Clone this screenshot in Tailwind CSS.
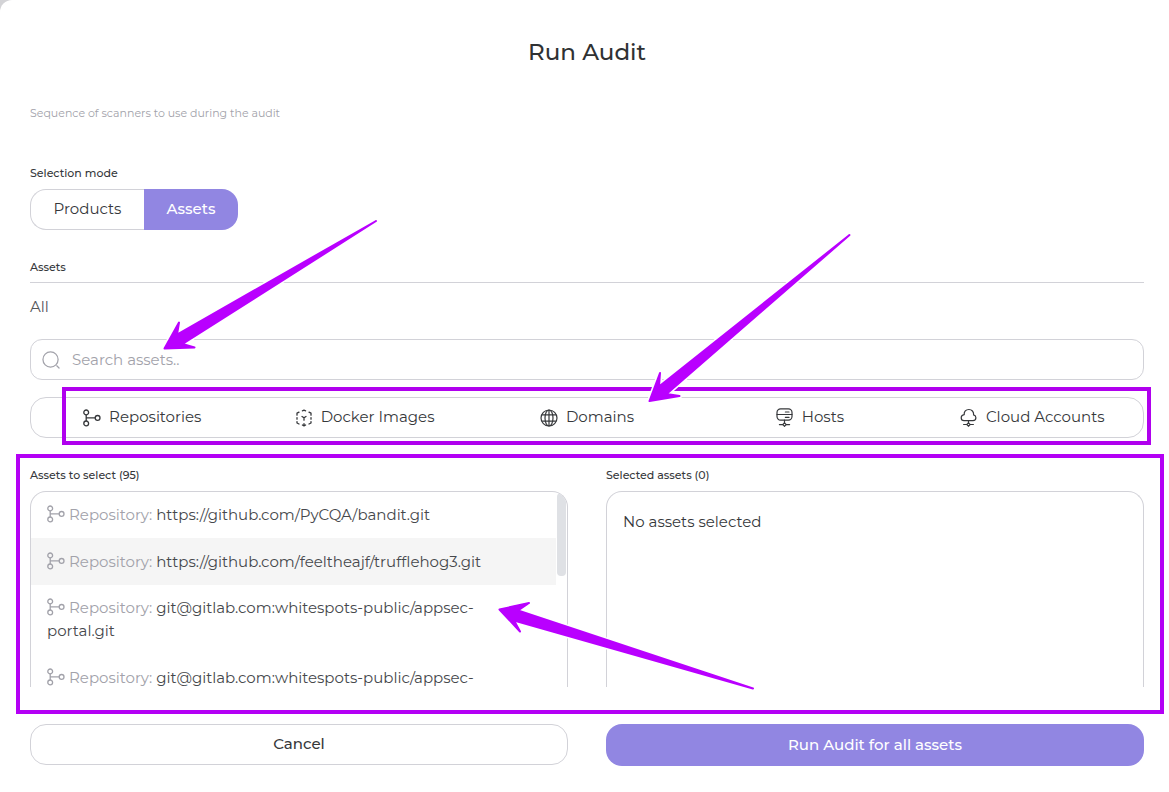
<!DOCTYPE html>
<html lang="en">
<head>
  <meta charset="UTF-8" />
  <meta name="viewport" content="width=device-width, initial-scale=1.0"/>
  <title>Run Audit</title>
  <script src="https://cdn.jsdelivr.net/npm/@tailwindcss/browser@4"></script>
</head>
<body class="bg-[#d3d3d6] font-['Montserrat','Inter',sans-serif] text-[#36383b]">
  <!-- Shared icons -->
  <svg class="hidden">
    <symbol id="icon-repo" viewBox="0 0 18 18">
      <g fill="none" stroke="currentColor" stroke-width="1.3">
        <circle cx="3.2" cy="3.4" r="2.4"/>
        <circle cx="3.2" cy="14.4" r="2.4"/>
        <circle cx="14.6" cy="8.9" r="2.4"/>
        <path d="M3.2 5.8v6.2M3.2 8.9h9"/>
      </g>
    </symbol>
  </svg>

  <main class="relative min-h-screen rounded-tl-[12px] bg-white pt-9 pr-[25px] pb-6 pl-[30px]">
    <h1 class="text-center text-[23px] leading-8 font-medium text-[#2f3133]">Run Audit</h1>
    <p class="mt-9 text-[11px] leading-[18px] text-[#a2a2aa]">Sequence of scanners to use during the audit</p>

    <!-- Selection mode -->
    <h2 class="mt-[42px] text-[11px] leading-[18px] font-medium">Selection mode</h2>
    <div class="mt-[7px] flex h-[41px] text-[15px]">
      <button type="button" class="w-[114px] rounded-l-[16px] border border-r-0 border-[#d2d2d8] pb-px">Products</button>
      <button type="button" class="w-[94px] rounded-r-[16px] bg-[#9186e2] pb-px font-medium text-white">Assets</button>
    </div>

    <!-- Assets -->
    <h2 class="mt-7 border-b border-[#d2d2d8] pb-[6px] text-[11px] leading-[18px] font-medium">Assets</h2>
    <p class="mt-3 text-[15px] leading-6 text-[#55575b]">All</p>

    <label class="mt-5 flex h-[41px] items-center gap-3 rounded-[12px] border border-[#d2d2d8] px-[11px]">
      <svg class="size-[18px] text-[#a2a2aa]" viewBox="0 0 19 19" fill="none" stroke="currentColor" stroke-width="1.3">
        <circle cx="9" cy="9" r="8"/>
        <path d="M15.6 15.6l2.4 2.4" stroke-linecap="round"/>
      </svg>
      <input type="text" placeholder="Search assets.." aria-label="Search assets" class="grow pt-px text-[15px] outline-none placeholder:text-[#a2a2aa]" />
    </label>

    <div class="relative mt-[17px]">
      <div class="grid h-[41px] grid-cols-5 rounded-[16px] border border-[#d2d2d8] text-[15px]">
        <button type="button" class="flex items-center justify-center gap-2">
          <svg class="size-[18px]"><use href="#icon-repo"/></svg>
          Repositories
        </button>
        <button type="button" class="flex items-center justify-center gap-2">
          <svg class="size-[18px]" viewBox="0 0 18 18" fill="none" stroke="currentColor" stroke-width="1.3" stroke-linecap="round" stroke-linejoin="round">
            <path d="M7.4 1.8L9 1.2l1.6.6M4 3.2L2 4.2v2M14 3.2l2 1v2M2 8.600v1.600M16 8.600v1.600M2 12.600v1.400l2 1M16 12.600v1.400l-2 1M7.400 16L9 16.900l1.600-.900M9 14.600v2.300M9 8.800v2.400M9 8.800L7 7.500M9 8.800l2-1.300"/>
          </svg>
          Docker Images
        </button>
        <button type="button" class="flex items-center justify-center gap-2">
          <svg class="size-[18px]" viewBox="0 0 18 18" fill="none" stroke="currentColor" stroke-width="1.2">
            <circle cx="9" cy="9" r="8"/>
            <ellipse cx="9" cy="9" rx="4" ry="8"/>
            <path d="M9 1v16M1.8 5.8h14.4M1.8 12.2h14.4"/>
          </svg>
          Domains
        </button>
        <button type="button" class="flex items-center justify-center gap-2">
          <svg class="size-[19px]" viewBox="0 0 19 19" fill="none" stroke="currentColor" stroke-width="1.2">
            <rect x="2" y=".8" width="15" height="11.4" rx="3.6"/>
            <path d="M2 6.5h15M10.4 4h3.6M10.4 9.4h3.6M9.5 12.2v2.8M4.4 16.6h3.4M11.2 16.6h3.4" stroke-linecap="round"/>
            <path d="M9.5 14.9l1.7 1.7-1.7 1.7-1.7-1.7z"/>
          </svg>
          Hosts
        </button>
        <button type="button" class="flex items-center justify-center gap-2">
          <svg class="size-[19px]" viewBox="0 0 19 19" fill="none" stroke="currentColor" stroke-width="1.2">
            <path d="M5 12.6h9c1.7 0 2.9-1.2 2.900-2.800 0-1.500-.9-2.500-2.300-2.900.3-3.200-1.800-5.400-4.700-5.400-3.100 0-5 2.200-4.700 5.100C3.400 6.900 2.200 8.100 2.200 9.700c0 1.700 1.200 2.900 2.800 2.900zM9.500 12.600v2.400"/>
            <path d="M4.600 16.500h3.200M11.200 16.500h3.200M9.500 14.800l1.700 1.700-1.700 1.700-1.700-1.700z" stroke-linecap="round"/>
          </svg>
          Cloud Accounts
        </button>
      </div>
      <div class="pointer-events-none absolute -top-[10px] -right-[7px] -bottom-[7px] left-8 border-4 border-[#b000ee]"></div>
    </div>

    <div class="relative mt-7 grid grid-cols-2 gap-x-[38px]">
      <section>
        <h2 class="text-[11px] leading-[18px] font-medium">Assets to select (95)</h2>
        <div class="relative mt-[7px] h-[196px] overflow-hidden rounded-t-[16px] border border-b-0 border-[#d2d2d8] text-[15px] leading-[23px]">
          <ul class="mr-[11px] text-[#46484c]">
            <li class="px-4 pt-[11px] pb-3"><svg class="mr-1 inline size-[18px] align-[-3px] text-[#a2a2aa]"><use href="#icon-repo"/></svg><span class="text-[#a2a2aa]">Repository:</span> https://github.com/PyCQA/bandit.git</li>
            <li class="bg-[#f5f5f5] px-4 py-3"><svg class="mr-1 inline size-[18px] align-[-3px] text-[#a2a2aa]"><use href="#icon-repo"/></svg><span class="text-[#a2a2aa]">Repository:</span> https://github.com/feeltheajf/trufflehog3.git</li>
            <li class="px-4 pt-[11px] pb-3"><svg class="mr-1 inline size-[18px] align-[-3px] text-[#a2a2aa]"><use href="#icon-repo"/></svg><span class="text-[#a2a2aa]">Repository:</span> git@gitlab.com:whitespots-public/appsec-<br>portal.git</li>
            <li class="px-4 py-3"><svg class="mr-1 inline size-[18px] align-[-3px] text-[#a2a2aa]"><use href="#icon-repo"/></svg><span class="text-[#a2a2aa]">Repository:</span> git@gitlab.com:whitespots-public/appsec-</li>
          </ul>
          <!-- Scrollbar thumb -->
          <div class="absolute top-px right-px h-[83px] w-[9px] rounded-[4px] bg-[#dfe1e5]"></div>
        </div>
      </section>
      <section>
        <h2 class="text-[11px] leading-[18px] font-medium">Selected assets (0)</h2>
        <div class="mt-[7px] h-[196px] rounded-t-[16px] border border-b-0 border-[#d2d2d8] px-4 py-[18px] text-[15px] leading-6">No assets selected</div>
      </section>
      <div class="pointer-events-none absolute -top-3 -right-5 -bottom-[27px] -left-[14px] border-4 border-[#b400f5]"></div>
    </div>

    <!-- Actions -->
    <div class="mt-[37px] grid grid-cols-2 items-start gap-x-[38px] text-[15px]">
      <button type="button" class="h-[41px] rounded-[16px] border border-[#d2d2d8] font-medium">Cancel</button>
      <button type="button" class="h-[42px] rounded-[16px] bg-[#9186e2] font-medium text-white">Run Audit for all assets</button>
    </div>

    <!-- Pointer arrows over the form -->
    <svg class="pointer-events-none absolute top-0 left-0 h-[792px] w-[1169px]" viewBox="0 0 1169 792" stroke-linejoin="round">
      <defs>
        <path id="arrows" d="M164.500 348.500L179 322.500L177 334.500L376 221L182.500 344L194.500 347.500ZM649.500 401L660 373L659 386.500L849.500 235L666.500 394L679.500 396ZM499.500 609.500L529 603L518 610.500L753 688.500L514 620.500L520 631.500Z"/>
      </defs>
      <use href="#arrows" fill="#fff" stroke="#fff" stroke-width="5"/>
      <use href="#arrows" fill="#b900ff" stroke="#b900ff" stroke-width="2"/>
    </svg>
  </main>
</body>
</html>
